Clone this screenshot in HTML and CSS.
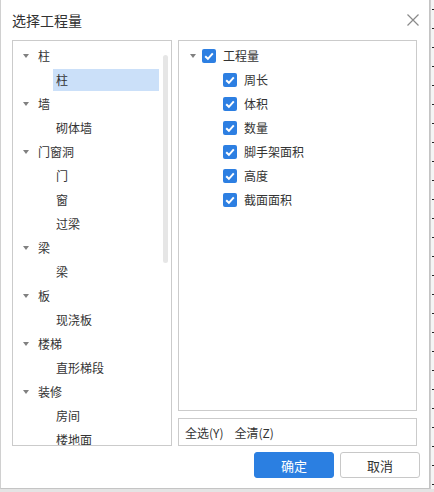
FILE: index.html
```html
<!DOCTYPE html>
<html lang="zh">
<head>
<meta charset="utf-8">
<title>选择工程量</title>
<link rel="stylesheet" href="styles.css">
</head>
<body>
<div class="page">
  <div class="dialog">
    <div class="titlebar">
      <span class="title">选择工程量</span>
      <svg class="close" width="12" height="12" viewBox="0 0 12 12"><path d="M0.5 0.5 L11.5 11.5 M11.5 0.5 L0.5 11.5" stroke="#8a8a8a" stroke-width="1.2" fill="none"/></svg>
    </div>
    <div class="body">
      <div class="left-panel">
        <div class="tree">
          <div class="row parent"><span class="arrow"></span><span class="label">柱</span></div>
          <div class="row child"><span class="label selected">柱</span></div>
          <div class="row parent"><span class="arrow"></span><span class="label">墙</span></div>
          <div class="row child"><span class="label">砌体墙</span></div>
          <div class="row parent"><span class="arrow"></span><span class="label">门窗洞</span></div>
          <div class="row child"><span class="label">门</span></div>
          <div class="row child"><span class="label">窗</span></div>
          <div class="row child"><span class="label">过梁</span></div>
          <div class="row parent"><span class="arrow"></span><span class="label">梁</span></div>
          <div class="row child"><span class="label">梁</span></div>
          <div class="row parent"><span class="arrow"></span><span class="label">板</span></div>
          <div class="row child"><span class="label">现浇板</span></div>
          <div class="row parent"><span class="arrow"></span><span class="label">楼梯</span></div>
          <div class="row child"><span class="label">直形梯段</span></div>
          <div class="row parent"><span class="arrow"></span><span class="label">装修</span></div>
          <div class="row child"><span class="label">房间</span></div>
          <div class="row child"><span class="label">楼地面</span></div>
        </div>
        <div class="scroll-thumb"></div>
      </div>
      <div class="right-col">
        <div class="right-tree">
          <div class="row rparent"><span class="arrow"></span><span class="cb"></span><span class="rlabel">工程量</span></div>
          <div class="row rchild"><span class="cb"></span><span class="rlabel">周长</span></div>
          <div class="row rchild"><span class="cb"></span><span class="rlabel">体积</span></div>
          <div class="row rchild"><span class="cb"></span><span class="rlabel">数量</span></div>
          <div class="row rchild"><span class="cb"></span><span class="rlabel">脚手架面积</span></div>
          <div class="row rchild"><span class="cb"></span><span class="rlabel">高度</span></div>
          <div class="row rchild"><span class="cb"></span><span class="rlabel">截面面积</span></div>
        </div>
        <div class="selbar">
          <span>全选(Y)</span>
          <span>全清(Z)</span>
        </div>
      </div>
    </div>
    <div class="footer">
      <button class="btn primary">确定</button>
      <button class="btn">取消</button>
    </div>
  </div>
  <div class="edge"></div>
</div>
</body>
</html>
```

FILE: styles.css
```css
* { box-sizing: border-box; }
html, body { margin: 0; padding: 0; }
body {
  width: 434px;
  height: 492px;
  overflow: hidden;
  background: #e4e4e4;
  font-family: "Noto Sans CJK SC", "Noto Sans", sans-serif;
  color: #333;
}
.page {
  display: flex;
  width: 434px;
  height: 492px;
}
.dialog {
  width: 430px;
  height: 489px;
  background: #fff;
  border-right: 1px solid #c4c4c4;
  border-bottom: 1px solid #c4c4c4;
  border-left: 1px solid #d0d0d0;
  padding: 0 11px 0 11px;
  display: flex;
  flex-direction: column;
}
.edge {
  flex: 1;
  height: 489px;
  background: #f4f4f4 repeating-linear-gradient(to bottom, transparent 0, transparent 9px, #222 9px, #222 10px, transparent 10px, transparent 19px);
  background-size: 2px 100%;
  background-position: right top;
  background-repeat: repeat-y;
  border-left: 1px solid #cfcfcf;
}
.titlebar {
  height: 40px;
  display: flex;
  align-items: center;
  justify-content: space-between;
}
.title {
  font-size: 14px;
  color: #333;
  line-height: 20px;
  margin-top: -1px;
}
.close { margin-right: -1px; margin-top: -1px; }
.body {
  display: flex;
  gap: 6px;
}
.left-panel {
  position: relative;
  width: 160px;
  height: 406px;
  border: 1px solid #cbcbcb;
  overflow: hidden;
}
.tree { padding-top: 3px; }
.row {
  height: 24px;
  display: flex;
  align-items: center;
  font-size: 12px;
  white-space: nowrap;
}
.arrow {
  width: 0;
  height: 0;
  border-left: 3.5px solid transparent;
  border-right: 3.5px solid transparent;
  border-top: 4px solid #808080;
}
.parent { padding-left: 10px; }
.parent .arrow { margin-right: 6px; }
.child { padding-left: 40px; }
.label {
  height: 22px;
  line-height: 22px;
  padding: 0 3px;
}
.label.selected {
  background: #cbe0f9;
  width: 106px;
}
.scroll-thumb {
  position: absolute;
  left: 150px;
  top: 14px;
  width: 5px;
  height: 208px;
  border-radius: 3px;
  background: #e6e6e6;
}
.right-col {
  width: 239px;
  display: flex;
  flex-direction: column;
  gap: 7px;
}
.right-tree {
  height: 371px;
  border: 1px solid #cbcbcb;
  padding-top: 3px;
}
.rparent { padding-left: 11px; }
.rparent .arrow { margin-right: 6px; }
.rchild { padding-left: 44px; }
.cb {
  width: 14px;
  height: 14px;
  border-radius: 2px;
  background: #2d7fe2 url("data:image/svg+xml,%3Csvg xmlns='http://www.w3.org/2000/svg' width='14' height='14' viewBox='0 0 14 14'%3E%3Cpath d='M3.2 7.2 L5.9 9.8 L10.8 4.4' stroke='white' stroke-width='2' fill='none'/%3E%3C/svg%3E") no-repeat center;
  margin-right: 7px;
  flex: none;
}
.rlabel { line-height: 22px; }
.selbar {
  height: 28px;
  border: 1px solid #cbcbcb;
  display: flex;
  align-items: center;
  gap: 11px;
  padding-left: 6px;
  font-size: 12px;
}
.footer {
  display: flex;
  justify-content: flex-end;
  gap: 6px;
  margin-top: 6px;
  margin-right: -2px;
}
.btn {
  width: 80px;
  height: 26px;
  border: 1px solid #c8c8c8;
  border-radius: 3px;
  background: #fff;
  font-family: "Noto Sans CJK SC", "Noto Sans", sans-serif;
  font-size: 13px;
  color: #333;
  padding: 0;
}
.btn.primary {
  background: #2b7fe1;
  border-color: #2b7fe1;
  color: #fff;
}
```
